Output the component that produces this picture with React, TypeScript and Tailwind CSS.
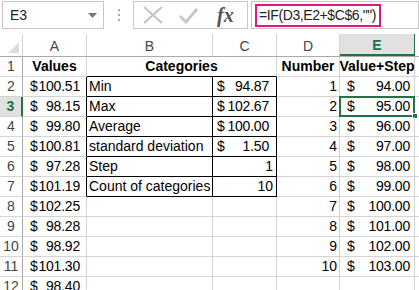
import React from 'react';

const GRID = 'border-[#d4d4d4]';

const colA = ['100.51', '98.15', '99.80', '100.81', '97.28', '101.19', '102.25', '98.28', '98.92', '101.30', '98.40'];

const cats: { label: string; value: string; money: boolean }[] = [
  { label: 'Min', value: '94.87', money: true },
  { label: 'Max', value: '102.67', money: true },
  { label: 'Average', value: '100.00', money: true },
  { label: 'standard deviation', value: '1.50', money: true },
  { label: 'Step', value: '1', money: false },
  { label: 'Count of categories', value: '10', money: false },
];

const steps = ['94.00', '95.00', '96.00', '97.00', '98.00', '99.00', '100.00', '101.00', '102.00', '103.00'];

function Money({ value, pl, pr }: { value: string; pl: string; pr: string }) {
  return (
    <div className={`flex h-full items-center justify-between ${pl} ${pr}`}>
      <span>$</span>
      <span className="tracking-[-0.2px]">{value}</span>
    </div>
  );
}

function Toolbar() {
  return (
    <div className="flex h-[34px] items-start pt-[1px]">
      {/* Name box */}
      <div className="ml-[2px] flex h-[28px] w-[102px] items-center justify-between border border-[#c6c6c6] pl-[7px] pr-[6px]">
        <span className="text-[14px] text-[#222]">E3</span>
        <svg width="9" height="5" viewBox="0 0 9 5">
          <path d="M0 0 H9 L4.5 5 Z" fill="#777" />
        </svg>
      </div>
      {/* dots */}
      <div className="flex h-[28px] w-[29px] flex-col items-center justify-center gap-[3px]">
        <div className="h-[2px] w-[2px] bg-[#aaa]" />
        <div className="h-[2px] w-[2px] bg-[#aaa]" />
        <div className="h-[2px] w-[2px] bg-[#aaa]" />
      </div>
      {/* cancel / enter / fx */}
      <div className="flex h-[28px] w-[115px] items-center border border-[#c6c6c6]">
        <svg width="20" height="18" viewBox="0 0 20 18" className="ml-[9px]">
          <path d="M1 1 L19 17 M19 1 L1 17" stroke="#c2c2c2" strokeWidth="2" />
        </svg>
        <svg width="19" height="17" viewBox="0 0 19 17" className="ml-[16px]">
          <path d="M1 9 L7 15 L18 2" stroke="#c8c8c8" strokeWidth="3" fill="none" />
        </svg>
        <span
          className="ml-[19px] text-[20px] font-bold italic text-[#555]"
          style={{ fontFamily: '"Liberation Serif", serif' }}
        >
          fx
        </span>
      </div>
      {/* formula box */}
      <div className="ml-[3px] flex h-[28px] flex-1 items-center border border-[#c6c6c6] pl-[3px]">
        <div className="flex h-[23px] items-center border-2 border-[#e6147e] pl-[2px] pr-[3px]">
          <span className="text-[14px] tracking-[-0.4px] text-[#222]">=IF(D3,E2+$C$6,"")</span>
        </div>
      </div>
    </div>
  );
}

function HeaderRow() {
  const cols = [
    { l: 'A', w: 'w-[64px]' },
    { l: 'B', w: 'w-[126px]' },
    { l: 'C', w: 'w-[64px]' },
    { l: 'D', w: 'w-[63px]' },
  ];
  return (
    <div className="flex h-[23px] border-b border-[#ababab]">
      <div className="relative w-[23px] shrink-0 border-r border-[#d4d4d4]">
        <svg width="11" height="11" viewBox="0 0 11 11" className="absolute bottom-[3px] right-[3px]">
          <path d="M11 0 V11 H0 Z" fill="#dcdcdc" />
        </svg>
      </div>
      {cols.map((c) => (
        <div
          key={c.l}
          className={`${c.w} flex shrink-0 items-center justify-center border-r border-[#d4d4d4] pt-[2px] text-[14px] text-[#444]`}
        >
          {c.l}
        </div>
      ))}
      <div className="flex w-[75px] shrink-0 items-center justify-center border-b-2 border-r border-[#217346] bg-[#e1e1e1] pt-[2px] text-[14px] font-bold text-[#217346]">
        E
      </div>
      <div className="flex-1" />
    </div>
  );
}

export default function App() {
  const rows = Array.from({ length: 12 }, (_, i) => i + 1);
  return (
    <div
      className="h-[290px] w-[419px] overflow-hidden bg-white text-[14px] text-black"
      style={{ fontFamily: '"Liberation Sans", Arial, sans-serif' }}
    >
      <Toolbar />
      <HeaderRow />
      {rows.map((r) => {
        const cat = r >= 2 && r <= 7 ? cats[r - 2] : null;
        const boxed = r >= 2 && r <= 7;
        const step = r >= 2 && r <= 11 ? steps[r - 2] : null;
        return (
          <div key={r} className="flex h-[20px]">
            {/* row header */}
            <div
              className={`flex w-[23px] shrink-0 items-center justify-center border-b ${GRID} text-[14px] ${
                r === 3
                  ? 'border-r-2 border-r-[#217346] bg-[#e1e1e1] font-bold text-[#217346]'
                  : 'border-r border-r-[#ababab] text-[#444]'
              }`}
            >
              {r}
            </div>
            {/* A */}
            <div
              className={`w-[64px] shrink-0 border-b ${GRID} border-r ${boxed ? 'border-r-black' : ''}`}
            >
              {r === 1 ? (
                <div className="flex h-full items-center justify-center font-bold">Values</div>
              ) : (
                <Money value={colA[r - 2]} pl="pl-[7px]" pr="pr-[6px]" />
              )}
            </div>
            {/* B + C */}
            {r === 1 ? (
              <div className="flex w-[190px] shrink-0 items-center justify-center border-b border-r border-b-black border-r-[#d4d4d4] font-bold">
                Categories
              </div>
            ) : (
              <>
                <div
                  className={`w-[126px] shrink-0 border-b border-r ${
                    boxed ? 'border-black' : GRID
                  } flex items-center whitespace-nowrap pl-[2px]`}
                >
                  {cat?.label}
                </div>
                <div className={`w-[64px] shrink-0 border-b border-r ${boxed ? 'border-black' : GRID}`}>
                  {cat &&
                    (cat.money ? (
                      <Money value={cat.value} pl="pl-[4px]" pr="pr-[7px]" />
                    ) : (
                      <div className="flex h-full items-center justify-end pr-[3px]">{cat.value}</div>
                    ))}
                </div>
              </>
            )}
            {/* D */}
            <div
              className={`flex w-[63px] shrink-0 items-center border-b border-r ${GRID} ${
                r === 1 ? 'justify-center font-bold' : 'justify-end pr-[2px]'
              }`}
            >
              {r === 1 ? 'Number' : step ? String(r - 1) : ''}
            </div>
            {/* E */}
            <div className={`relative w-[75px] shrink-0 border-b border-r ${GRID}`}>
              {r === 1 ? (
                <div className="flex h-full items-center justify-center font-bold">Value+Step</div>
              ) : step ? (
                <Money value={step} pl="pl-[7px]" pr="pr-[4px]" />
              ) : null}
              {r === 3 && (
                <>
                  <div className="absolute -left-[1px] -top-[1px] bottom-[-1px] right-[-1px] border-2 border-[#217346]" />
                  <div className="absolute -bottom-[3px] -right-[4px] h-[6px] w-[6px] border border-white bg-[#217346]" />
                </>
              )}
            </div>
            <div className={`flex-1 border-b ${GRID}`} />
          </div>
        );
      })}
    </div>
  );
}
